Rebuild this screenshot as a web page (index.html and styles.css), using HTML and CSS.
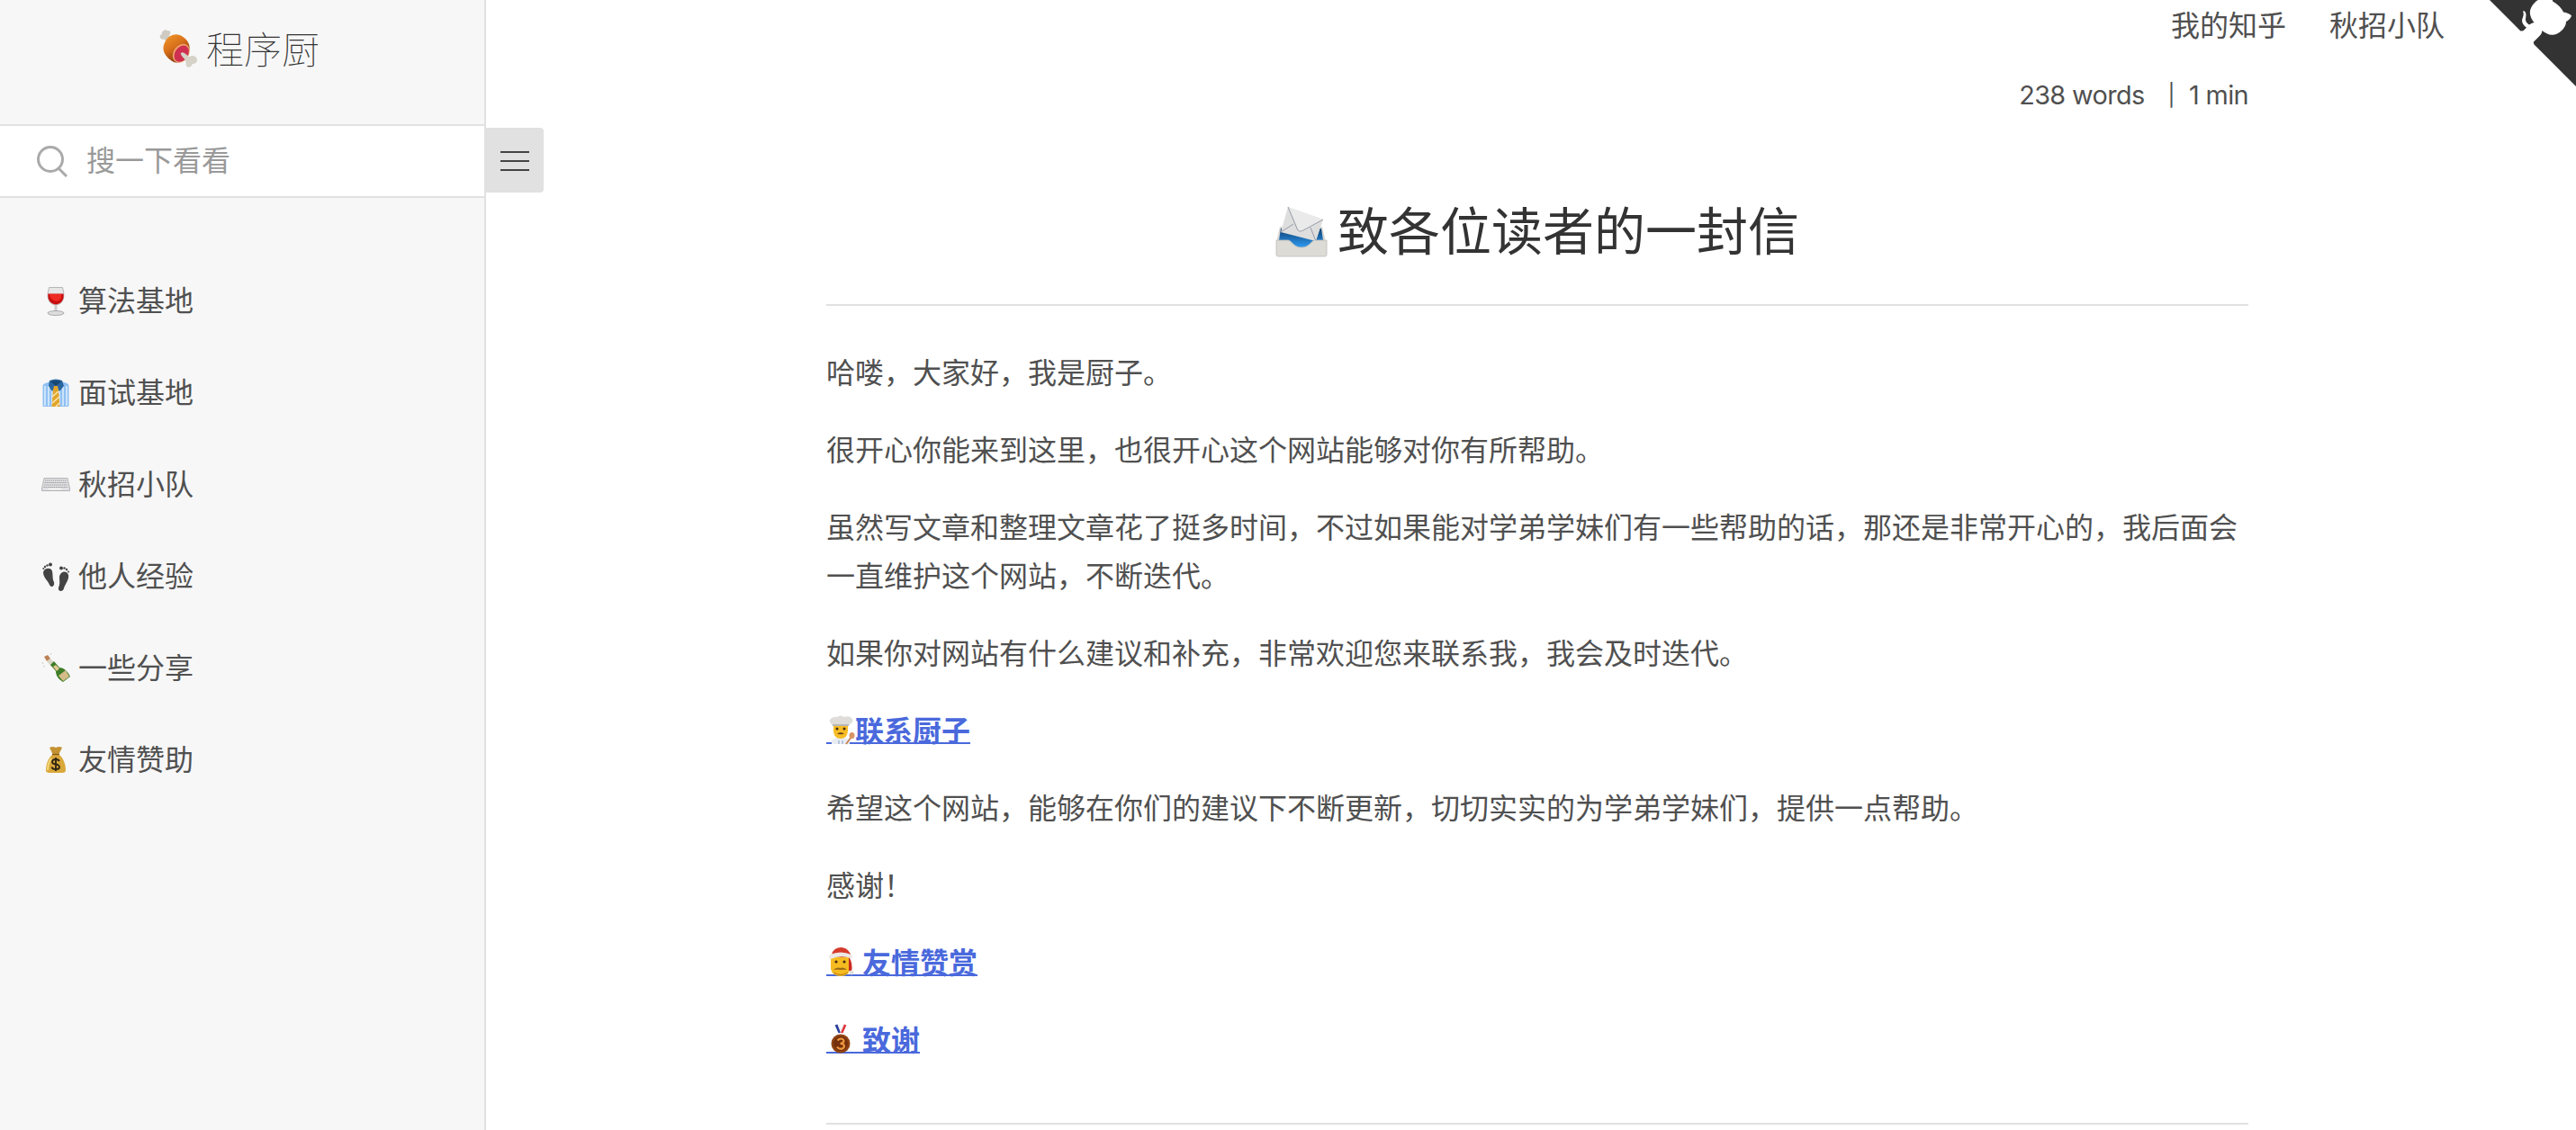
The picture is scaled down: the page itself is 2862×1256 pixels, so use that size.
FILE: index.html
```html
<!DOCTYPE html>
<html lang="zh-CN">
<head>
    <meta charset="UTF-8">
    <meta name="viewport" content="width=device-width, initial-scale=1.0">
    <title>程序厨</title>
    <link rel="stylesheet" href="styles.css">
</head>
<body>
    <aside class="sidebar">
        <h1 class="app-name"><a href="#/">
            <svg class="emoji" viewBox="0 0 32 32">
                <defs><linearGradient id="meat" x1="0" y1="0" x2="0.6" y2="1"><stop offset="0" stop-color="#f39a2c"/><stop offset="0.5" stop-color="#d8701a"/><stop offset="1" stop-color="#7d3410"/></linearGradient></defs>
                <path d="M6 10L4 8C1 9-1 5 2 4C2 1 5-1 7 1C10 0 10 4 8 5L11 8z" fill="#cfcbc2"/>
                <path d="M5 10C8 4 15 2 20 6C26 10 27 16 24 21C21 27 15 30 10 26C3 21 2 15 5 10z" fill="url(#meat)"/>
                <ellipse cx="18.500" cy="20" rx="6.500" ry="8.500" transform="rotate(35 18.5 20)" fill="#f0a26c"/>
                <ellipse cx="18.800" cy="20.300" rx="5.500" ry="7.500" transform="rotate(35 18.8 20.3)" fill="#cf2f50"/>
                <path d="M18 20C20 18 22 20 25 23C28 21 32 22 32 26C32 28 29 29 28 29C27 33 22 33 22.500 28C23 25 19 24 18 20z" fill="#d6d2c8"/>
            </svg><span>程序厨</span></a></h1>
        <div class="search">
            <svg class="search-icon" viewBox="0 0 36 36"><ellipse cx="16" cy="16" rx="13.500" ry="13.500"/><path d="M25 26L34 35"/></svg>
            <span>搜一下看看</span>
        </div>
        <ul class="sidebar-nav">
            <li><a href="#"><svg class="emoji" viewBox="0 0 32 32">
                <path d="M8.500.5H23.500C26 9 26 19 16 20C6 19 6 9 8.500.5z" fill="#e6e6e6" stroke="#aaa" stroke-width=".8"/>
                <path d="M7.500 7.500H24.500C25.500 14 22 19 16 19.500C10 19 6.500 14 7.500 7.500z" fill="#c80d0d"/>
                <path d="M9 8h13c1 6-2 7-5 8-5-1-8-4-8-8z" fill="#ed2b22"/>
                <path d="M14.500 20h3v7h-3z" fill="#ccc"/><ellipse cx="16" cy="29" rx="9" ry="2.500" fill="#ddd" stroke="#999" stroke-width=".8"/>
            </svg><span>算法基地</span></a></li>
            <li><a href="#"><svg class="emoji" viewBox="0 0 32 32">
                <path d="M1.500 8C1.500 5 8 4 11 3H21C26 4 30.500 5 30.500 8V30Q30.500 31 29 31H3Q1.500 31 1.500 30z" fill="#8fc0f3"/>
                <path d="M4 8v22M8 8v22M12 12v18M20 12v18M24 8v22M28 8v22" stroke="#d3e8fc" stroke-width="1.800"/>
                <path d="M9 2Q16-1 23 2L25 8L20 14L16 8L12 14L8 8z" fill="#2a659f"/>
                <path d="M10 3Q16 1 22 3L16 8z" fill="#174773"/>
                <path d="M14 8h4l1 4L20.500 31H11.500L13 12z" fill="#e2a52b"/>
                <path d="M12 20l7-6M12 27l8-7M16 31l4-4" stroke="#fae9b5" stroke-width="1.500"/>
            </svg><span>面试基地</span></a></li>
            <li><a href="#"><svg class="emoji" viewBox="0 0 32 32">
                <path d="M3 8.500H29L31.500 20V22.500H.5V20z" fill="#e2e2e4" stroke="#a5a5a8" stroke-width=".8"/>
                <path d="M4 11h24M3.500 13.500h25M3 16h26M2.500 18.500h27" stroke="#98989c" stroke-width="1" stroke-dasharray="1.500 .7"/>
                <path d="M8 20.500h14" stroke="#f5f5f5" stroke-width="1.500"/>
            </svg><span>秋招小队</span></a></li>
            <li><a href="#"><svg class="emoji" viewBox="0 0 32 32" fill="#444">
                <path d="M2 11C3 6 11 5 12 10C13 15 12 18 14 22C15 28 10 28 9 25C7 20 2 17 2 11z"/>
                <path d="M20 17C20 10 28 8 30 14C31 20 26 24 25 29C24 33 18 33 19 28C21 24 20 21 20 17z"/>
                <circle cx="10" cy="2.500" r="2"/><circle cx="6.500" cy="3.500" r="1.200"/><circle cx="4" cy="5" r="1.200"/><circle cx="2.300" cy="7" r="1"/>
                <circle cx="22" cy="6.500" r="2"/><circle cx="25.500" cy="6.500" r="1.200"/><circle cx="28" cy="8" r="1.200"/><circle cx="30" cy="10.500" r="1"/>
            </svg><span>他人经验</span></a></li>
            <li><a href="#"><svg class="emoji" viewBox="0 0 32 32">
                <path d="M3 3L7 1L10 5L6 8z" fill="#bd8053"/>
                <path d="M6 8L10 5L15 10L11 14z" fill="#d9d5c5"/>
                <path d="M10 12L14 8L20 15C25 15 30 20 32 25L24 31C19 28 16 24 16 19z" fill="#3d7d27"/>
                <path d="M13 14L16 12L20 16L17 19z" fill="#e3c693"/>
                <path d="M19 24L27 18L31 25L24 30z" fill="#d4bc88"/>
                <path d="M1 9l1 2M10 1l1-2M2 14l2-1" stroke="#ccc" stroke-width="1"/>
            </svg><span>一些分享</span></a></li>
            <li><a href="#"><svg class="emoji" viewBox="0 0 32 32">
                <path d="M9 2Q13 0 16 2Q20 0 23 2L19 10H13z" fill="#c59333"/>
                <path d="M13 9H19C24 13 27 20 27 27Q27 30 23 30H9Q5 30 5 27C5 20 8 13 13 9z" fill="#d9a83a"/>
                <path d="M11 14C8 18 7 22 7 27" stroke="#f5d77c" stroke-width="2" fill="none"/>
                <path d="M12 9.500h8" stroke="#8c601a" stroke-width="1.500"/>
                <path d="M20 17Q19 15 16 15Q12 15 12 18Q12 20 16 20.500Q20 21 20 24Q20 26 16 26Q12 26 11.500 23.500M16 13V28" fill="none" stroke="#2d2412" stroke-width="1.800"/>
            </svg><span>友情赞助</span></a></li>
        </ul>
    </aside>

    <main class="content">
        <button class="sidebar-toggle"><span></span><span></span><span></span></button>
        <a href="#" class="github-corner">
            <svg viewBox="0 0 250 250">
                <path d="M0,0 L115,115 L130,115 L142,142 L250,250 L250,0 Z" fill="#333"/>
                <path d="M128.3,109.0 C113.8,99.7 119.0,89.6 119.0,89.6 C122.0,82.7 120.5,78.6 120.5,78.6 C119.2,72.0 123.4,76.3 123.4,76.3 C127.3,80.9 125.5,87.3 125.5,87.3 C122.9,97.6 130.6,101.9 134.4,103.2" fill="#fff"/>
                <path d="M115.0,115.0 C114.9,115.1 118.7,116.5 119.8,115.4 L133.7,101.6 C136.9,99.2 139.9,98.4 142.2,98.6 C133.8,88.0 127.5,74.4 143.8,58.0 C148.5,53.4 154.0,51.2 159.7,51.0 C160.3,49.4 163.2,43.6 171.4,40.1 C171.4,40.1 176.1,42.5 178.8,56.2 C183.1,58.6 187.2,61.8 190.9,65.4 C194.5,69.0 197.7,73.2 200.1,77.6 C213.8,80.2 216.3,84.9 216.3,84.9 C212.7,93.1 206.9,96.0 205.4,96.6 C205.1,102.4 203.0,107.8 198.3,112.5 C181.9,128.9 168.3,122.5 157.7,114.1 C157.9,116.9 156.7,120.9 152.7,124.9 L141.0,136.5 C139.8,137.7 141.6,141.9 141.8,141.8 Z" fill="#fff"/>
            </svg>
        </a>
        <nav class="app-nav">
            <a href="#">我的知乎</a>
            <a href="#">秋招小队</a>
        </nav>

        <article class="markdown-section">
            <div class="word-count"><span>238 words</span><span class="bar">|</span><span>1 min</span></div>
            <h1 class="title">
                <svg class="emoji" viewBox="0 0 57 57">
                    <defs><linearGradient id="tray" x1="0" y1="0" x2="0" y2="1"><stop offset="0" stop-color="#0c3f70"/><stop offset="1" stop-color="#2e9bf5"/></linearGradient></defs>
                    <path d="M5 23H52L56 40H1z" fill="#d7d6d2"/>
                    <path d="M6 25H51L53 38L36 46H22L4 38z" fill="url(#tray)"/>
                    <path d="M14 1L53 15L45 39L41 38L6 29z" fill="#dedede"/>
                    <path d="M14 1L53 15L31 28Q27 30 25 26z" fill="#eaeaea"/>
                    <path d="M14 1L24 25Q26 30 31 27L53 15M6 29L20 20M45 39L39 24" fill="none" stroke="#959aa5" stroke-width="1"/>
                    <path d="M1 38H14C18 38 20 46 29 46C38 46 40 38 44 38H57V54Q57 56 55 56H3Q1 56 1 54z" fill="#dcdbd5" stroke="#bdbcb6" stroke-width=".8"/>
                </svg><span>致各位读者的一封信</span></h1>
            <hr>
            <p>哈喽，大家好，我是厨子。</p>
            <p>很开心你能来到这里，也很开心这个网站能够对你有所帮助。</p>
            <p>虽然写文章和整理文章花了挺多时间，不过如果能对学弟学妹们有一些帮助的话，那还是非常开心的，我后面会一直维护这个网站，不断迭代。</p>
            <p>如果你对网站有什么建议和补充，非常欢迎您来联系我，我会及时迭代。</p>
            <p><a href="#"><svg class="emoji" viewBox="0 0 32 32">
                <path d="M6 28Q16 20 26 28V32H6z" fill="#e9edf3"/>
                <path d="M8 10H24V18Q23 26 16 26Q9 26 8 18z" fill="#f7bd25"/>
                <path d="M7 11Q1 6 6 3Q10 1 12 2Q16-1 20 2Q26 0 29 4Q31 7 25 11z" fill="#deddda"/>
                <path d="M7 10H25V12H7z" fill="#b9b7b3"/>
                <circle cx="12" cy="15" r="1.500" fill="#432a12"/><circle cx="20" cy="15" r="1.500" fill="#432a12"/>
                <path d="M12 20.500Q16 18 20 20.500Q16 22 12 20.500z" fill="#654018"/>
                <path d="M22 32L28 24" stroke="#c98755" stroke-width="2"/><ellipse cx="28.500" cy="22.500" rx="3" ry="3.500" fill="#d89568"/>
                <path d="M14 28v4M18 28v4" stroke="#85a0c4"/>
            </svg>联系厨子</a></p>
            <p>希望这个网站，能够在你们的建议下不断更新，切切实实的为学弟学妹们，提供一点帮助。</p>
            <p>感谢！</p>
            <p><a href="#"><svg class="emoji" viewBox="0 0 32 32">
                <path d="M5 10H26V24Q25 32 16 32Q7 32 5 24z" fill="#f5bb20"/>
                <path d="M25 10Q30 18 28 27L25 26z" fill="#c92d1f"/>
                <path d="M6 8Q8 0 17 0Q26 1 28 11H5z" fill="#d63a2b"/>
                <path d="M4 8Q16 3 28 8Q31 12 27 12Q16 8 5 13Q1 12 4 8z" fill="#ece9e5"/>
                <circle cx="28" cy="28" r="2.500" fill="#e0dfdc"/>
                <circle cx="11" cy="16" r="1.600" fill="#432a12"/><circle cx="20" cy="16" r="1.600" fill="#432a12"/>
                <path d="M8 25Q12 21.500 15.500 23Q19 21.500 23 25Q19 24.500 15.500 25Q12 24.500 8 25z" fill="#9a6b14"/>
                <path d="M8 28Q16 33 24 28" stroke="#b57b12" fill="none"/>
            </svg>&nbsp;友情赞赏</a></p>
            <p><a href="#"><svg class="emoji" viewBox="0 0 32 32">
                <path d="M11 0L15 9" stroke="#273c9a" stroke-width="3"/><path d="M21 0L17 9" stroke="#df3038" stroke-width="3"/>
                <path d="M13.500 0L16 7L19 0" stroke="#eee" stroke-width="1.500" fill="none"/>
                <circle cx="16" cy="21" r="10.500" fill="#8f4315"/><circle cx="16" cy="21" r="8" fill="#74300c"/>
                <path d="M12.500 17.500Q14 15.500 16.500 15.500Q19.500 16 19.500 18.300Q19 20.800 15.500 20.800Q20 21 20 24Q19.500 26.800 16 26.800Q13 26.500 12 24.500" fill="none" stroke="#ee963d" stroke-width="2.200"/>
            </svg>&nbsp;致谢</a></p>
            <hr class="end">
        </article>
    </main>
</body>
</html>
```

FILE: styles.css
```css
* {
    box-sizing: border-box;
}

body {
    display: flex;
    height: 100vh;
    margin: 0;
    overflow: hidden;
    background-color: #fff;
    color: #505050;
    font-family: Inter, "Noto Sans CJK SC", sans-serif;
    font-size: 32px;
    line-height: 54px;
}

a {
    color: inherit;
    text-decoration: none;
}

.emoji {
    width: 1em;
    height: 1em;
    flex: none;
    overflow: visible;
}

/* sidebar */
.sidebar {
    width: 540px;
    flex: none;
    background-color: #f7f7f7;
    border-right: 2px solid #e1e1e1;
}

.app-name {
    height: 138px;
    margin: 0;
    padding: 26px 0 0 42px;
    color: #333;
    font-size: 42px;
    font-weight: 100;
    line-height: 60px;
}

.app-name a {
    display: flex;
    align-items: center;
    justify-content: center;
    gap: 10px;
    width: 448px;
}

.app-name .emoji {
    position: relative;
    top: -2px;
}

.search {
    display: flex;
    align-items: center;
    gap: 20px;
    height: 82px;
    padding-left: 40px;
    background-color: #fff;
    border-top: 2px solid #e1e1e1;
    border-bottom: 2px solid #e1e1e1;
    color: #999;
}

.search-icon {
    width: 36px;
    height: 36px;
    fill: none;
    stroke: #aaa;
    stroke-width: 3;
}

.sidebar-nav {
    margin: 0;
    padding: 88px 0 0 46px;
    list-style: none;
}

.sidebar-nav li {
    margin-bottom: 48px;
}

.sidebar-nav a {
    display: flex;
    align-items: center;
    gap: 9px;
}

/* content */
.content {
    position: relative;
    flex: 1;
    padding-left: 378px;
    overflow: hidden;
}

.sidebar-toggle {
    position: absolute;
    left: 0;
    top: 142px;
    display: flex;
    flex-direction: column;
    align-items: center;
    justify-content: center;
    gap: 8px;
    width: 64px;
    height: 72px;
    padding: 2px 0 0;
    border: 0;
    border-radius: 0 4px 4px 0;
    background-color: #e1e1e1;
}

.sidebar-toggle span {
    width: 32px;
    height: 2px;
    background-color: #444;
}

.github-corner {
    position: absolute;
    top: -30px;
    right: -14px;
}

.github-corner svg {
    display: block;
    width: 140px;
    height: 140px;
}

.app-nav {
    display: flex;
    justify-content: flex-end;
    gap: 48px;
    padding: 2px 146px 23px 0;
}

.markdown-section {
    width: 1580px;
}

.word-count {
    display: flex;
    justify-content: flex-end;
    font-size: 28.8px;
    letter-spacing: -0.6px;
}

.word-count .bar {
    margin: 0 16px 0 26px;
    font-size: 24px;
}

.title {
    display: flex;
    align-items: center;
    justify-content: center;
    gap: 12px;
    margin: 89px 0 44px;
    color: #333;
    font-size: 57px;
    font-weight: 400;
    line-height: 72px;
}

.title .emoji {
    position: relative;
    top: -1px;
}

hr {
    height: 2px;
    margin: 0 0 48px;
    border: 0;
    background-color: #e1e1e1;
}

hr.end {
    margin: 64px 0 0;
}

p {
    margin: 0 0 32px;
}

/* the line runs behind the emoji too, so it is a background */
p a {
    background: linear-gradient(#4a69dc, #4a69dc) 0 32px / 100% 2px no-repeat;
    color: #4a69dc;
    font-weight: 600;
}

p .emoji {
    vertical-align: -3px;
}
```
